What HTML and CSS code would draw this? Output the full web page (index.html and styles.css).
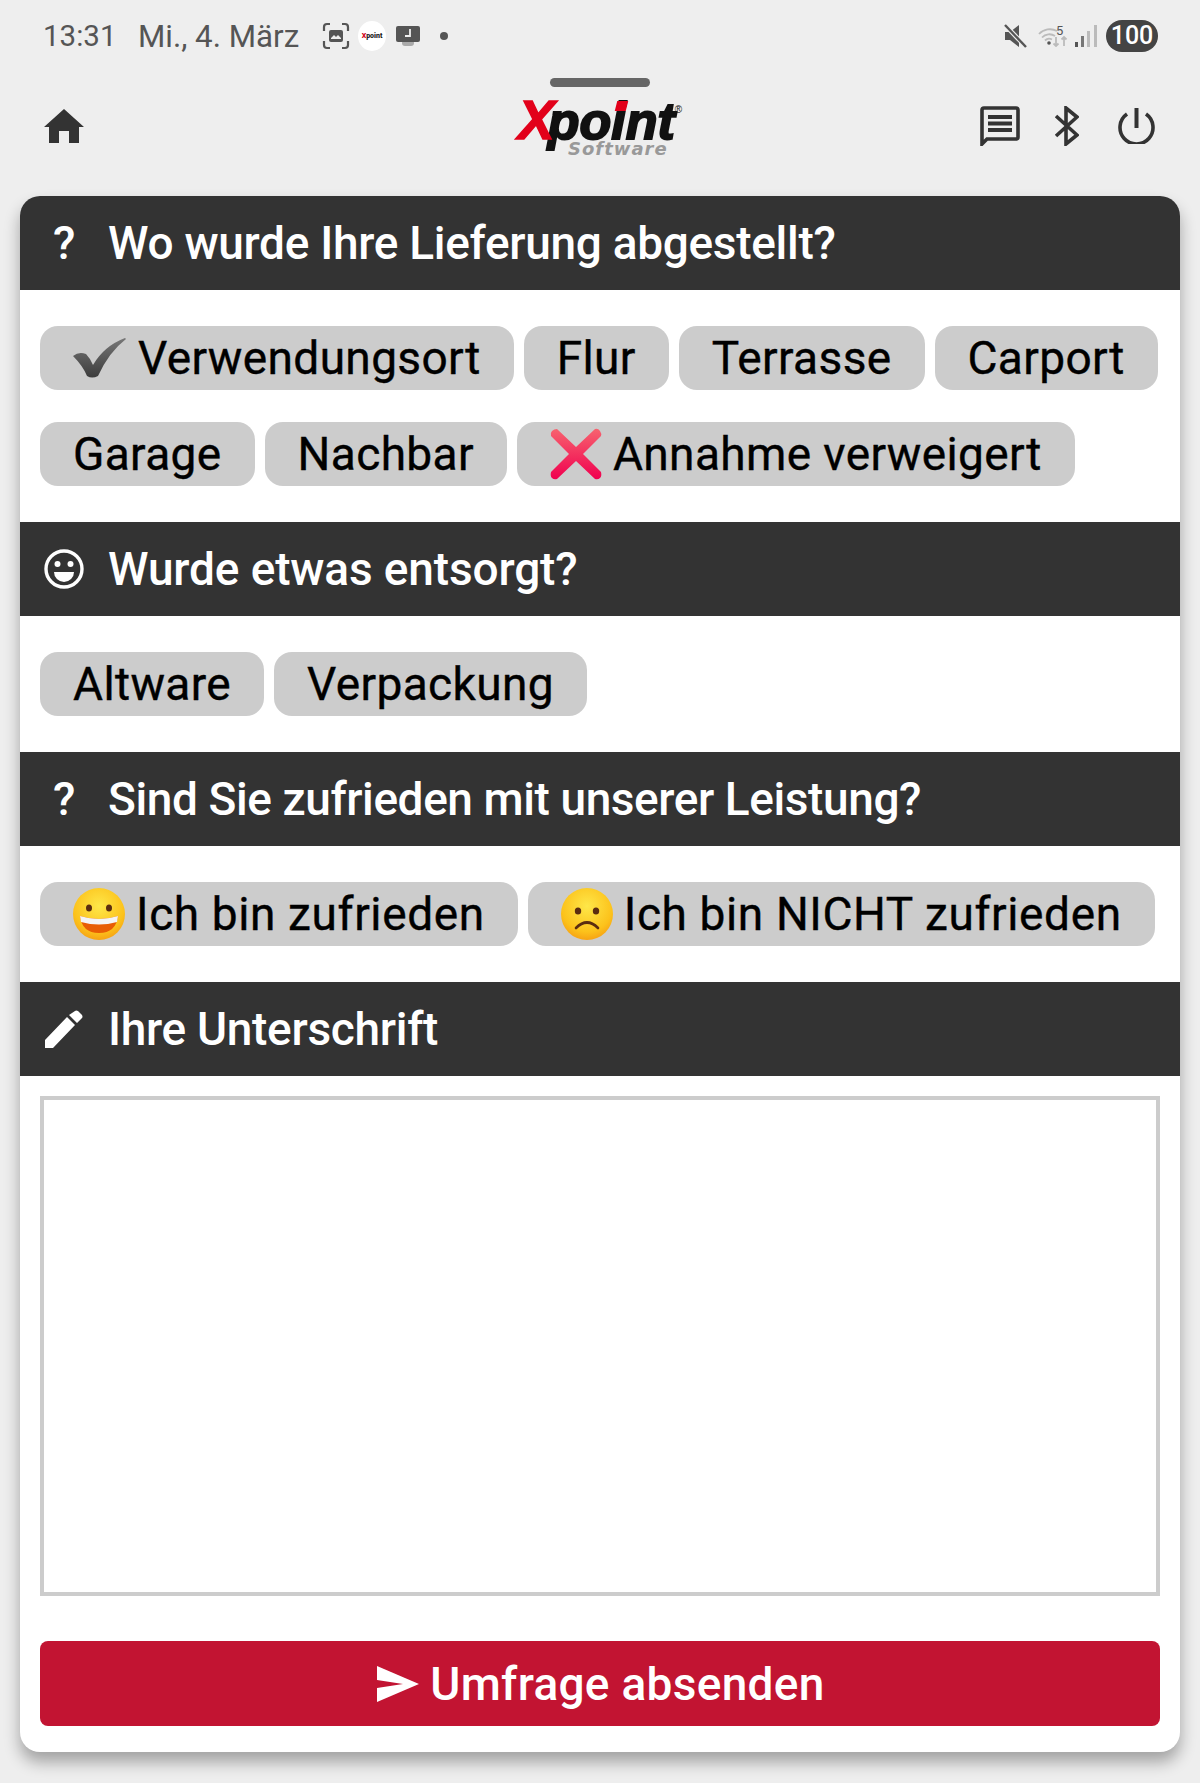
FILE: index.html
```html
<!DOCTYPE html>
<html>
<head>
  <title>Umfrage</title>
  <link rel="stylesheet" href="styles.css">
</head>
<body>
  <div class="status-bar">
    <div class="status-left">
      <span class="status-time">13:31</span>
      <span class="status-date">Mi., 4. März</span>
      <svg class="status-shot" viewBox="0 0 28 28"><path d="M2 9V5a3 3 0 0 1 3-3h3M20 2h3a3 3 0 0 1 3 3v4M26 19v4a3 3 0 0 1-3 3h-3M8 26H5a3 3 0 0 1-3-3v-4" fill="none" stroke="#555" stroke-width="2.2"/><rect x="7" y="8" width="14" height="12" rx="2" fill="#555"/><path d="M9 16l3-3 2 2 2-2 3 3v1H9z" fill="#eee"/></svg>
      <span class="status-app"><b>X</b>point</span>
      <svg class="status-clock" viewBox="0 0 24 20"><rect x="6" y="14" width="12" height="6" rx="3" fill="#aaa"/><rect x="0" y="0" width="24" height="16" rx="2" fill="#555"/><path d="M14 3v7H9" fill="none" stroke="#eee" stroke-width="1.8"/></svg>
      <span class="status-dot"></span>
    </div>
    <div class="status-right">
      <svg class="status-mute" viewBox="0 0 23 24"><path d="M1 8h5l9-7v22l-9-7H1z" fill="#555"/><path d="M1 1l21 22" stroke="#eee" stroke-width="4.5"/><path d="M1 1l21 22" stroke="#555" stroke-width="2.4"/></svg>
      <div class="status-wifi">
        <svg class="wifi-icon" viewBox="0 0 30 22"><path d="M1 9a15 15 0 0 1 18-3M4 12.500a10 10 0 0 1 13-1.500M7 15.500a6 6 0 0 1 7-1" fill="none" stroke="#bbb" stroke-width="1.8"/><circle cx="11" cy="18" r="1.8" fill="#555"/><path d="M18 12v9M15.500 18.500l2.500 2.500 2.500-2.500" fill="none" stroke="#bbb" stroke-width="1.8"/><path d="M26 21v-9M23.500 14.500l2.500-2.500 2.500 2.500" fill="none" stroke="#bbb" stroke-width="1.8"/></svg>
        <span class="wifi-num">5</span>
      </div>
      <svg class="status-signal" viewBox="0 0 22 22"><rect x="0" y="17" width="3" height="5" fill="#555"/><rect x="6" y="11" width="3" height="11" fill="#777"/><rect x="12" y="6" width="3" height="16" fill="#bbb"/><rect x="19" y="0" width="3" height="22" fill="#bbb"/></svg>
      <span class="status-battery">100</span>
    </div>
  </div>

  <div class="handle-row"><span class="handle"></span></div>

  <div class="app-bar">
    <svg class="home-icon" viewBox="0 0 40 34"><path d="M15 34V22h10v12h10V18h5L20 0 0 18h5v16z" fill="#333"/></svg>
    <div class="logo">
      <div class="logo-main"><span class="logo-x">X</span>po<span class="logo-i">i</span>nt<span class="logo-reg">®</span></div>
      <div class="logo-sub">Software</div>
    </div>
    <div class="app-actions">
      <svg class="act-chat" viewBox="0 0 40 40"><path d="M4 2h32a2 2 0 0 1 2 2v27a2 2 0 0 1-2 2H7l-5 5V4a2 2 0 0 1 2-2z" fill="none" stroke="#333" stroke-width="3.6"/><path d="M8 9h24v4H8zM8 15.500h24v4H8zM8 22h24v4H8z" fill="#333"/></svg>
      <svg class="act-bt" viewBox="0 0 25 40"><path d="M2 10l21 19-11 9V2l11 9L2 30" fill="none" stroke="#333" stroke-width="3.6"/></svg>
      <svg class="act-power" viewBox="0 0 37 36"><path d="M18.500 0v20" stroke="#333" stroke-width="4" fill="none"/><path d="M9 6a16.500 16.500 0 1 0 19 0" stroke="#333" stroke-width="3.6" fill="none"/></svg>
    </div>
  </div>

  <div class="card">
    <div class="section-head head-first">
      <span class="head-icon head-q">?</span>
      <span>Wo wurde Ihre Lieferung abgestellt?</span>
    </div>
    <div class="chips">
      <div class="chip">
        <svg class="chip-check" viewBox="0 0 54 40"><defs><linearGradient id="chk" x1="0" y1="0" x2="0" y2="1"><stop offset="0" stop-color="#777"/><stop offset="1" stop-color="#3c3c3c"/></linearGradient></defs><path d="M0 18q6-5 13-2 4 4 7 11Q31 8 52 0l1 1Q36 14 25 38q-6 3-11 0Q10 28 0 18z" fill="url(#chk)"/></svg>
        Verwendungsort
      </div>
      <div class="chip">Flur</div>
      <div class="chip">Terrasse</div>
      <div class="chip">Carport</div>
      <div class="chip">Garage</div>
      <div class="chip">Nachbar</div>
      <div class="chip">
        <svg class="chip-cross" viewBox="0 0 52 52"><defs><linearGradient id="crs" x1="0" y1="0" x2="0" y2="1"><stop offset="0" stop-color="#f7636f"/><stop offset="1" stop-color="#f0004f"/></linearGradient></defs><path d="M7 1l19 18L45 1q3-1 5 2t1 5L33 26l18 18q1 4-1 6t-5 1L26 33 7 51q-3 1-5-1t-1-6l18-18L1 8q-1-3 1-5t5-2z" fill="url(#crs)"/></svg>
        Annahme verweigert
      </div>
    </div>

    <div class="section-head head-loose">
      <svg class="head-icon-svg" viewBox="0 0 40 40"><circle cx="20" cy="20" r="18" fill="none" stroke="#fff" stroke-width="3.4"/><circle cx="13.500" cy="15" r="3" fill="#fff"/><circle cx="26.500" cy="15" r="3" fill="#fff"/><path d="M10 23h20a10 10 0 0 1-20 0z" fill="#fff"/></svg>
      <span>Wurde etwas entsorgt?</span>
    </div>
    <div class="chips">
      <div class="chip">Altware</div>
      <div class="chip">Verpackung</div>
    </div>

    <div class="section-head head-tight">
      <span class="head-icon head-q">?</span>
      <span>Sind Sie zufrieden mit unserer Leistung?</span>
    </div>
    <div class="chips">
      <div class="chip chip-wide">
        <svg class="chip-emoji" viewBox="0 0 52 52"><defs><radialGradient id="face" cx="0.5" cy="0.35" r="0.7"><stop offset="0" stop-color="#fee749"/><stop offset="0.7" stop-color="#fcc21b"/><stop offset="1" stop-color="#f59a12"/></radialGradient></defs><circle cx="26" cy="26" r="26" fill="url(#face)"/><ellipse cx="16" cy="20" rx="3" ry="3.600" fill="#5b2c10"/><ellipse cx="36" cy="20" rx="3" ry="3.600" fill="#5b2c10"/><path d="M7 28q19 6 38 0-2 17-19 17T7 28z" fill="#e85d04"/><path d="M7 28q19 6 38 0l-1 6q-18 5-36 0z" fill="#f4f4f4"/></svg>
        Ich bin zufrieden
      </div>
      <div class="chip chip-wide">
        <svg class="chip-emoji" viewBox="0 0 52 52"><circle cx="26" cy="26" r="26" fill="url(#face)"/><ellipse cx="17" cy="23" rx="3.2" ry="3.600" fill="#5b2c10"/><ellipse cx="35" cy="23" rx="3.2" ry="3.600" fill="#5b2c10"/><path d="M15 40q11-11 22 0" fill="none" stroke="#5b2c10" stroke-width="2.6" stroke-linecap="round"/></svg>
        Ich bin NICHT zufrieden
      </div>
    </div>

    <div class="section-head">
      <svg class="head-icon-svg" viewBox="0 0 40 40"><path d="M1 31v8h8L31 16l-8-8zM25 6l8 8 5-5q1-1 0-3l-4-4q-2-1-3 0z" fill="#fff"/></svg>
      <span>Ihre Unterschrift</span>
    </div>
    <div class="sign-wrap">
      <div class="sign-box"></div>
      <button type="button" class="send-btn">
        <svg class="send-icon" viewBox="0 0 42 36"><path d="M0 0l42 18L0 36V22l26-4L0 14z" fill="#fff"/></svg>
        Umfrage absenden
      </button>
    </div>
  </div>
</body>
</html>
```

FILE: styles.css
```css
body {
  margin: 0;
  background-color: #eeeeee;
  font-family: Roboto, "Liberation Sans", sans-serif;
  height: 1783px;
  overflow: hidden;
}

.status-bar {
  display: flex;
  justify-content: space-between;
  align-items: center;
  height: 34px;
  padding: 19px 42px 0 43px;
  color: #555;
}

.status-left,
.status-right {
  display: flex;
  align-items: center;
}

.status-time {
  font-size: 29.5px;
  width: 95px;
}

.status-date {
  font-size: 31.3px;
  width: 184px;
}

.status-shot {
  width: 28px;
  height: 28px;
}

.status-app {
  width: 28px;
  height: 30px;
  margin-left: 8px;
  border-radius: 50%;
  background-color: #fff;
  color: #222;
  font-size: 7px;
  font-weight: 900;
  line-height: 30px;
  text-align: center;
}

.status-app b {
  color: #d0021b;
}

.status-clock {
  width: 24px;
  height: 20px;
  margin-left: 10px;
}

.status-dot {
  width: 8px;
  height: 8px;
  margin-left: 20px;
  border-radius: 50%;
  background-color: #555;
}

.status-mute {
  width: 23px;
  height: 24px;
}

.status-wifi {
  position: relative;
  width: 30px;
  height: 22px;
  margin-left: 11px;
}

.wifi-icon {
  display: block;
  width: 30px;
  height: 22px;
}

.wifi-num {
  position: absolute;
  top: -2px;
  left: 18px;
  color: #555;
  font-size: 13px;
  line-height: 15px;
}

.status-signal {
  width: 22px;
  height: 22px;
  margin-left: 7px;
}

.status-battery {
  width: 52px;
  height: 32px;
  margin-left: 9px;
  border-radius: 16px;
  background-color: #444;
  color: #fff;
  font-size: 25px;
  font-weight: 500;
  line-height: 32px;
  text-align: center;
}

.handle-row {
  display: flex;
  justify-content: center;
  padding-top: 25px;
}

.handle {
  width: 100px;
  height: 9px;
  border-radius: 5px;
  background-color: #666;
}

.app-bar {
  display: flex;
  align-items: center;
  height: 72px;
  padding: 0 45px 0 44px;
  margin-top: 3px;
}

.home-icon {
  width: 40px;
  height: 34px;
  flex: none;
}

.logo {
  width: 172px;
  margin-left: 434px;
  font-family: "Liberation Sans", sans-serif;
  font-style: italic;
  font-weight: bold;
}

.logo-main {
  height: 42px;
  padding-top: 3px;
  color: #111;
  font-size: 52px;
  line-height: 42px;
  white-space: nowrap;
  -webkit-text-stroke: 2px #111;
}

.logo-x {
  position: relative;
  z-index: 1;
  margin-right: -7px;
  color: #e2001a;
  font-size: 55px;
  line-height: 0;
  -webkit-text-stroke: 1.5px #e2001a;
}

.logo-i {
  position: relative;
}

/* red dot of the i */
.logo-i::after {
  content: "";
  position: absolute;
  top: 9px;
  left: 5px;
  width: 11px;
  height: 10px;
  background-color: #e2001a;
  transform: skewX(-14deg);
}

.logo-reg {
  font-size: 10px;
  font-style: normal;
  font-weight: normal;
  line-height: 0;
  vertical-align: 26px;
  -webkit-text-stroke: 0;
}

.logo-sub {
  margin: 0 0 0 50px;
  color: #999;
  font-family: "DejaVu Sans", sans-serif;
  font-size: 18px;
  line-height: 14px;
  letter-spacing: 1px;
}

.app-actions {
  display: flex;
  align-items: center;
  margin-left: auto;
}

.act-chat {
  width: 40px;
  height: 40px;
}

.act-bt {
  width: 25px;
  height: 40px;
  margin-left: 34px;
}

.act-power {
  width: 37px;
  height: 36px;
  margin-left: 39px;
}

.card {
  position: absolute;
  top: 196px;
  left: 20px;
  width: 1160px;
  height: 1556px;
  border-radius: 20px;
  background-color: #fff;
  box-shadow: 0 10px 16px rgba(0, 0, 0, 0.32);
}

.section-head {
  display: flex;
  align-items: center;
  height: 94px;
  padding-left: 24px;
  background-color: #333;
  color: #fff;
  font-size: 46px;
  font-weight: 500;
  letter-spacing: -0.3px;
}

.head-first {
  border-radius: 20px 20px 0 0;
}

.head-loose {
  letter-spacing: -0.14px;
}

.head-tight {
  letter-spacing: -0.41px;
}

.head-icon {
  width: 40px;
  margin-right: 24px;
  text-align: center;
}

.head-icon-svg {
  width: 40px;
  height: 40px;
  margin-right: 24px;
}

.chips {
  display: flex;
  flex-wrap: wrap;
  gap: 32px 10px;
  padding: 36px 20px;
}

.chip {
  display: flex;
  align-items: center;
  height: 64px;
  padding: 0 33px;
  border-radius: 18px;
  background-color: #ccc;
  color: #000;
  font-size: 46px;
  letter-spacing: 0.38px;
  white-space: nowrap;
  -webkit-text-stroke: 0.4px #000;
}

.chip-wide {
  letter-spacing: 0.62px;
}

.chip-check {
  width: 54px;
  height: 40px;
  margin-right: 11px;
}

.chip-cross {
  width: 52px;
  height: 52px;
  margin-right: 11px;
}

.chip-emoji {
  width: 52px;
  height: 52px;
  margin-right: 11px;
}

.sign-wrap {
  padding: 20px 20px 0;
}

.sign-box {
  height: 492px;
  border: 4px solid #ccc;
  background-color: #fff;
}

.send-btn {
  display: flex;
  justify-content: center;
  align-items: center;
  width: 100%;
  height: 85px;
  margin-top: 45px;
  padding-left: 8px;
  border: none;
  border-radius: 8px;
  background-color: #c21432;
  color: #fff;
  font-family: Roboto, "Liberation Sans", sans-serif;
  font-size: 46px;
  font-weight: 500;
  letter-spacing: 0.3px;
}

.send-icon {
  width: 42px;
  height: 36px;
  margin-right: 11px;
}
```
